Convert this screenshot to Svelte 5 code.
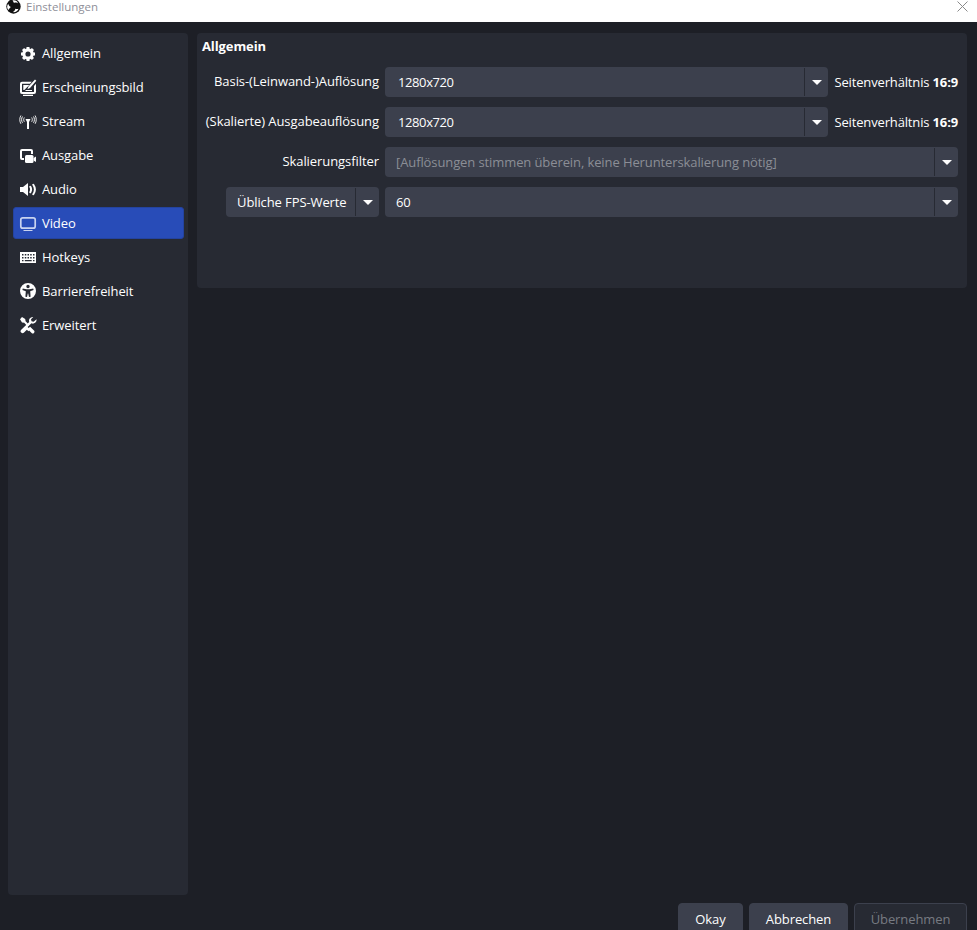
<script>
  const nav = ['Allgemein', 'Erscheinungsbild', 'Stream', 'Ausgabe', 'Audio', 'Video', 'Hotkeys', 'Barrierefreiheit', 'Erweitert'];
</script>

{#snippet arrow()}
  <span class="arrow"><svg width="10" height="5" viewBox="0 0 10 5"><path d="M0 0h10L5 5z" fill="#fefefe" /></svg></span>
{/snippet}

{#snippet navIcon(name)}
  <svg class="nav-icon" width="18" height="18" viewBox="0 0 18 18" fill="#fefefe">
    {#if name === 'Allgemein'}
      <circle cx="9" cy="10" r="4.200" fill="none" stroke="#fefefe" stroke-width="3.200" />
      {#each [0, 45, 90, 135] as a (a)}
        <path d="M7.500 3h3v2.500h-3zM7.500 14.500h3V17h-3z" transform="rotate({a} 9 10)" />
      {/each}
    {:else if name === 'Erscheinungsbild'}
      <path d="M3 3.800h9.800L11 5.800H3.300a.3.300 0 0 0-.3.300v7.600a.3.300 0 0 0 .3.300h11.400a.3.300 0 0 0 .3-.3V8l2-2.200V14a2 2 0 0 1-2 2H3a2 2 0 0 1-2-2V5.800a2 2 0 0 1 2-2z" />
      <path d="M16 1.500l1.300 1.300-6.300 7.200-2.600 1.300 1.100-2.800zM4.300 7h6l-5 5h-1zM6.500 12h6.500v1H6.500zM4 16.800h10V18H4z" />
    {:else if name === 'Stream'}
      <path d="M6.500 7h5l-1.500 3v7H8v-7z" />
      <path d="M5.300 5.500c-.8 1.300-.8 3 0 4.300M12.700 5.500c.8 1.300.8 3 0 4.300M3.500 4.500c-1.200 1.800-1.200 4.500 0 6.300M14.500 4.500c1.200 1.800 1.200 4.500 0 6.300M1.900 3.500c-1.500 2.500-1.500 5.800 0 8.300M16.100 3.500c1.500 2.500 1.500 5.800 0 8.300" fill="none" stroke="#fefefe" stroke-width=".9" />
    {:else if name === 'Ausgabe'}
      <path d="M3 3h9a2 2 0 0 1 2 2v3h-2V5.300a.3.300 0 0 0-.3-.3H3.300a.3.300 0 0 0-.3.300v6.400a.3.300 0 0 0 .3.300H5v2H3a2 2 0 0 1-2-2V5a2 2 0 0 1 2-2z" />
      <rect x="6" y="9" width="8.500" height="8" rx="1.500" />
      <path d="M14.500 12l2.500-1.600V16l-2.500-1.600z" />
    {:else if name === 'Audio'}
      <path d="M1 7h3l5-4v13l-5-4H1z" />
      <path d="M11.300 6.800c1 1.700 1 3.700 0 5.400M14.300 4.800c2 2.900 2 6.500 0 9.400" fill="none" stroke="#fefefe" stroke-width="2" stroke-linecap="round" />
    {:else if name === 'Video'}
      <rect x="1.800" y="3.800" width="14.400" height="10.400" rx="2" fill="none" stroke="#c9d3f0" stroke-width="1.700" />
      <path d="M4.500 16h9v1h-9z" fill="#c9d3f0" />
    {:else if name === 'Hotkeys'}
      <path fill-rule="evenodd" d="M1 4h16v11H1zM3 6v1.500h1.500V6zm2.800 0v1.500h1.500V6zm2.700 0v1.500H10V6zm2.700 0v1.500h1.500V6zm2.800 0v1.500h1.500V6zM3 9v1.500h1.500V9zm2.800 0v1.500h1.500V9zm2.700 0v1.500H10V9zm2.700 0v1.500h1.500V9zm2.800 0v1.500h1.500V9zM3 12v1.300h1.500V12zm2.800 0v1.300h6.900V12zm8.200 0v1.300h1.500V12z" />
    {:else if name === 'Barrierefreiheit'}
      <path fill-rule="evenodd" d="M9 1a8 8 0 1 1 0 16A8 8 0 0 1 9 1zm0 1.800a1.700 1.700 0 1 0 0 3.400 1.700 1.700 0 0 0 0-3.400zM3.800 6.500l-.4 1.600 3.400 1.100-.4 5.600 1.600.3.800-3.600h.4l.8 3.600 1.600-.3-.4-5.600 3.400-1.100-.4-1.600C11.500 7.400 6.500 7.400 3.800 6.500z" />
    {:else}
      <path d="M3 1l3.200 2 .4 2.300 3.600 3.600-1.500 1.500L5.200 6.800 3 6.400 1 3.200z" />
      <path d="M13.700 1a3.700 3.700 0 0 0-3.500 4.900L2 14a2 2 0 0 0 2.800 2.800l3.100-3.100 1.500 1.500.7-.7 2.500 2.500a1.700 1.700 0 0 0 2.400-2.400l-3.900-3.900-1.400 1.400-1.100-1.100 3.800-3.700a3.700 3.700 0 0 0 5.100-4L14.600 5.700l-2.100-.5-.5-2L14.300 1z" />
    {/if}
  </svg>
{/snippet}

<div class="window">
  <header class="titlebar">
    <svg class="logo" width="15" height="15" viewBox="0 0 15 15">
      <circle cx="7.500" cy="7.500" r="7.200" fill="#111" />
      <path d="M6.500 1.500c2.500-.6 5 .6 5.500 3-.8-1-2.800-1.400-4-.6C7.500 3 7 2.200 6.500 1.500zM2.500 11c-1.700-1.700-1.800-4.700-.2-6.300.1 1.300 1.300 2.800 2.600 3.300-.8.500-1.700 1.700-2.400 3zM12.500 9.800c-.7 2.300-3.300 3.800-5.700 3.300 1.200-.5 2.400-2 2.500-3.400 1 .3 2.300.5 3.200.1z" fill="#fff" />
    </svg>
    <span class="window-title">Einstellungen</span>
    <svg class="close" width="11" height="11" viewBox="0 0 11 11"><path d="M.5.500l10 10M10.500.500l-10 10" stroke="#8a8a8a" stroke-width="1" fill="none" /></svg>
  </header>

  <div class="body">
    <nav class="sidebar">
      {#each nav as item (item)}
        <div class="nav-item" class:active={item === 'Video'}>
          {@render navIcon(item)}
          <span>{item}</span>
        </div>
      {/each}
    </nav>

    <section class="panel">
      <h2>Allgemein</h2>
      <div class="form">
        <span class="label">Basis-(Leinwand-)Auflösung</span>
        <div class="with-aspect">
          <div class="combo"><span class="value num">1280x720</span>{@render arrow()}</div>
          <span class="aspect">Seitenverhältnis <b>16:9</b></span>
        </div>

        <span class="label">(Skalierte) Ausgabeauflösung</span>
        <div class="with-aspect">
          <div class="combo"><span class="value num">1280x720</span>{@render arrow()}</div>
          <span class="aspect">Seitenverhältnis <b>16:9</b></span>
        </div>

        <span class="label">Skalierungsfilter</span>
        <div class="combo"><span class="value muted">[Auflösungen stimmen überein, keine Herunterskalierung nötig]</span>{@render arrow()}</div>

        <div class="fps-type combo"><span class="value">Übliche FPS-Werte</span>{@render arrow()}</div>
        <div class="combo"><span class="value short">60</span>{@render arrow()}</div>
      </div>
    </section>
  </div>

  <footer class="buttons">
    <button class="okay">Okay</button>
    <button class="cancel">Abbrechen</button>
    <button class="apply" disabled>Übernehmen</button>
  </footer>
</div>

<style>
  :global(body) {
    margin: 0;
    background: #1d1f26;
  }
  .window {
    height: 930px;
    overflow: hidden;
    display: flex;
    flex-direction: column;
    background: #1d1f26;
    color: #fefefe;
    font-family: "Open Sans", sans-serif;
    font-size: 13px;
    letter-spacing: -0.1px;
  }
  .titlebar {
    height: 22px;
    flex: none;
    background: #fff;
    display: flex;
    align-items: flex-start;
    padding: 0 9px 0 6px;
    box-sizing: border-box;
  }
  .logo {
    margin-top: -1px;
  }
  .window-title {
    margin-left: 5px;
    font-size: 11.500px;
    letter-spacing: 0;
    line-height: 14px;
    color: #8f8f99;
  }
  .close {
    margin-left: auto;
    margin-top: 1px;
  }
  .body {
    flex: none;
    height: 862px;
    margin-top: 11px;
    padding: 0 10px 0 8px;
    display: flex;
    gap: 9px;
  }
  .sidebar {
    width: 180px;
    background: #272a33;
    border-radius: 4px;
    padding: 3px 4px 0 5px;
    box-sizing: border-box;
  }
  .nav-item {
    height: 34px;
    display: flex;
    align-items: center;
    gap: 5px;
    padding-left: 5px;
    box-sizing: border-box;
    border: 1px solid transparent;
    border-radius: 3px;
  }
  .nav-item.active {
    height: 32px;
    margin: 1px 0;
    background: #284cb8;
    border-color: #24439f;
  }
  .nav-icon {
    flex: none;
  }
  .panel {
    flex: 1;
    height: 255px;
    background: #272a33;
    border-radius: 4px;
    padding: 4px 9px 0 5px;
    box-sizing: border-box;
  }
  h2 {
    margin: 0 0 12px;
    font-size: 13px;
    line-height: 18px;
    font-weight: 700;
  }
  .form {
    display: grid;
    grid-template-columns: 177px 1fr;
    column-gap: 6px;
    row-gap: 10px;
    grid-auto-rows: 30px;
    align-items: center;
  }
  .label {
    text-align: right;
    margin-top: -2px;
    white-space: nowrap;
    justify-self: end;
    letter-spacing: -0.07px;
  }
  .with-aspect {
    display: flex;
    align-items: center;
    gap: 6px;
    height: 30px;
  }
  .with-aspect .combo {
    flex: 1;
  }
  .aspect {
    white-space: nowrap;
    letter-spacing: -0.15px;
  }
  .combo {
    height: 30px;
    background: #3c404d;
    border-radius: 4px;
    display: flex;
    align-items: center;
    box-sizing: border-box;
  }
  .value {
    flex: 1;
    padding-left: 13px;
    white-space: nowrap;
    overflow: hidden;
  }
  .value.num {
    letter-spacing: -0.4px;
  }
  .value.muted {
    padding-left: 11px;
    color: #8b8e96;
  }
  .value.short {
    padding-left: 11px;
  }
  .arrow {
    flex: none;
    width: 23px;
    height: 28px;
    border-left: 1px solid #272a33;
    display: flex;
    align-items: center;
    justify-content: center;
  }
  .fps-type {
    margin-left: 24px;
  }
  .fps-type .value {
    padding-left: 11px;
  }
  .buttons {
    flex: none;
    display: flex;
    justify-content: flex-end;
    gap: 6px;
    margin-top: 8px;
    padding-right: 10px;
  }
  button {
    height: 32px;
    box-sizing: border-box;
    background: #3c404d;
    color: #fefefe;
    border: 1px solid #3c404d;
    border-radius: 4px;
    font: inherit;
    letter-spacing: inherit;
    padding: 0;
    line-height: 18px;
    text-align: center;
  }
  .okay {
    width: 65px;
  }
  .cancel {
    width: 99px;
  }
  .apply {
    width: 113px;
    background: #272a33;
    border-color: #3c404d;
    color: #777a82;
  }
</style>
